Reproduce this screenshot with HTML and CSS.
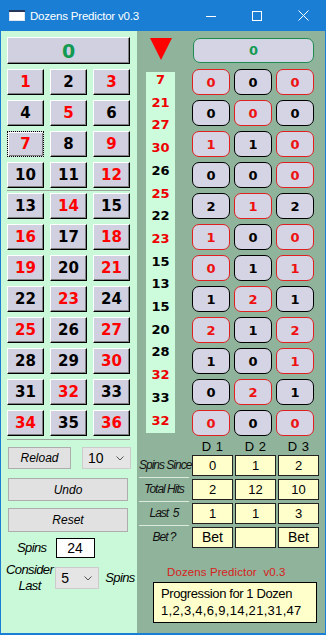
FILE: index.html
```html
<!DOCTYPE html>
<html lang="en">
<head>
    <meta charset="UTF-8">
    <meta name="viewport" content="width=device-width, initial-scale=1.0">
    <title>Dozens Predictor v0.3</title>
    <link rel="stylesheet" href="styles.css">
</head>
<body>
<div class="window">
    <!-- Barra de titulo -->
    <div class="titlebar">
        <svg class="app-icon" width="16" height="11" viewBox="0 0 16 11">
            <rect x="0.5" y="0.5" width="15" height="10" fill="#fff" stroke="#dfe6ee"/>
            <rect x="0" y="0" width="16" height="2" fill="#23375a"/>
        </svg>
        <span class="title">Dozens Predictor v0.3</span>
        <div class="controls">
            <span class="ctl"><svg width="10" height="10" viewBox="0 0 10 10"><path d="M0 5.5H10" stroke="#fff"/></svg></span>
            <span class="ctl"><svg width="10" height="10" viewBox="0 0 10 10"><rect x="0.5" y="0.5" width="9" height="9" fill="none" stroke="#fff"/></svg></span>
            <span class="ctl"><svg width="11" height="11" viewBox="0 0 11 11"><path d="M0.5 0.5L10.5 10.5M10.5 0.5L0.5 10.5" stroke="#fff"/></svg></span>
        </div>
    </div>

    <div class="client">
        <!-- Panel izquierdo: tablero de numeros -->
        <div class="left-panel">
            <button class="num big green">0</button>
            <div class="num-grid">
                <button class="num red">1</button>
                <button class="num">2</button>
                <button class="num red">3</button>
                <button class="num">4</button>
                <button class="num red">5</button>
                <button class="num">6</button>
                <button class="num red focus">7</button>
                <button class="num">8</button>
                <button class="num red">9</button>
                <button class="num">10</button>
                <button class="num">11</button>
                <button class="num red">12</button>
            </div>
            <div class="sep"></div>
            <div class="num-grid">
                <button class="num">13</button>
                <button class="num red">14</button>
                <button class="num">15</button>
                <button class="num red">16</button>
                <button class="num">17</button>
                <button class="num red">18</button>
                <button class="num red">19</button>
                <button class="num">20</button>
                <button class="num red">21</button>
                <button class="num">22</button>
                <button class="num red">23</button>
                <button class="num">24</button>
                <button class="num red">25</button>
                <button class="num">26</button>
                <button class="num red">27</button>
                <button class="num">28</button>
                <button class="num">29</button>
                <button class="num red">30</button>
                <button class="num">31</button>
                <button class="num red">32</button>
                <button class="num">33</button>
                <button class="num red">34</button>
                <button class="num">35</button>
                <button class="num red">36</button>
            </div>
            <div class="sep sep-last"></div>

            <div class="tool-row">
                <button class="win-btn reload">Reload</button>
                <div class="combo">
                    <span>10</span>
                    <svg width="8" height="5" viewBox="0 0 8 5"><path d="M0.5 0.5L4 4L7.5 0.5" fill="none" stroke="#555"/></svg>
                </div>
            </div>
            <button class="win-btn wide undo">Undo</button>
            <button class="win-btn wide reset">Reset</button>

            <div class="spins-row">
                <span class="side-label">Spins</span>
                <div class="textbox">24</div>
            </div>
            <div class="consider-row">
                <span class="side-label">Consider<br>Last</span>
                <div class="combo small">
                    <span>5</span>
                    <svg width="8" height="5" viewBox="0 0 8 5"><path d="M0.5 0.5L4 4L7.5 0.5" fill="none" stroke="#555"/></svg>
                </div>
                <span class="side-label">Spins</span>
            </div>
        </div>

        <!-- Panel derecho: historial y conteos -->
        <div class="right-panel">
            <div class="board">
                <div class="history-col">
                    <div class="arrow"></div>
                    <div class="history">
                        <div class="history-list">
                            <span class="red">7</span>
                            <span class="red">21</span>
                            <span class="red">27</span>
                            <span class="red">30</span>
                            <span>26</span>
                            <span class="red">25</span>
                            <span>22</span>
                            <span class="red">23</span>
                            <span>15</span>
                            <span>13</span>
                            <span>15</span>
                            <span>20</span>
                            <span>28</span>
                            <span class="red">32</span>
                            <span>33</span>
                            <span class="red">32</span>
                        </div>
                    </div>
                </div>
                <div class="counts">
                    <div class="count wide green">0</div>
                    <div class="count-grid">
                        <div class="count red">0</div><div class="count">0</div><div class="count red">0</div>
                        <div class="count">0</div><div class="count red">0</div><div class="count">0</div>
                        <div class="count red">1</div><div class="count">1</div><div class="count red">0</div>
                        <div class="count">0</div><div class="count">0</div><div class="count red">0</div>
                        <div class="count">2</div><div class="count red">1</div><div class="count">2</div>
                        <div class="count red">1</div><div class="count">0</div><div class="count red">0</div>
                        <div class="count red">0</div><div class="count">1</div><div class="count red">1</div>
                        <div class="count">1</div><div class="count red">2</div><div class="count">1</div>
                        <div class="count red">2</div><div class="count">1</div><div class="count red">2</div>
                        <div class="count">1</div><div class="count">0</div><div class="count red">1</div>
                        <div class="count">0</div><div class="count red">2</div><div class="count">1</div>
                        <div class="count red">0</div><div class="count">0</div><div class="count red">0</div>
                    </div>
                </div>
            </div>

            <div class="stats-head">
                <span></span><span>D 1</span><span>D 2</span><span>D 3</span>
            </div>
            <div class="stats">
                <span class="stat-label">Spins Since</span>
                <span class="cell">0</span><span class="cell">1</span><span class="cell">2</span>
                <span class="stat-label">Total Hits</span>
                <span class="cell">2</span><span class="cell">12</span><span class="cell">10</span>
                <span class="stat-label">Last&nbsp; 5</span>
                <span class="cell">1</span><span class="cell">1</span><span class="cell">3</span>
                <span class="stat-label last">Bet ?</span>
                <span class="cell bet">Bet</span><span class="cell bet"></span><span class="cell bet">Bet</span>
            </div>

            <div class="brand">Dozens Predictor  v0.3</div>
            <div class="progression">
                <div class="prog-title">Progression for 1 Dozen</div>
                <div class="prog-values">1,2,3,4,6,9,14,21,31,47</div>
            </div>
        </div>
    </div>
</div>
</body>
</html>
```

FILE: styles.css
```css
body {
    margin: 0;
    background: #ffffff;
    font-family: "Liberation Sans", Arial, sans-serif;
}
.window {
    width: 326px;
    height: 635px;
    background: #1a7fd4;
    display: flex;
    flex-direction: column;
}
.titlebar {
    height: 31px;
    display: flex;
    align-items: center;
    color: #fff;
}
.app-icon {
    margin-left: 9px;
    margin-top: 0;
}
.title {
    margin-left: 5px;
    font-size: 11.5px;
    letter-spacing: -0.2px;
}
.controls {
    margin-left: auto;
    display: flex;
    height: 31px;
}
.ctl {
    width: 46px;
    display: flex;
    align-items: center;
    justify-content: center;
}
.client {
    flex: 1;
    display: flex;
    margin: 0 1px 2px 1px;
}

/* Panel izquierdo */
.left-panel {
    width: 136px;
    background: #c9f9d9;
    padding: 6px 0 0 6px;
    box-sizing: border-box;
}
.num {
    padding: 0;
    margin: 0;
    background: #d0d0e0;
    border: 1px solid;
    border-color: #ffffff #000000 #000000 #ffffff;
    box-shadow: inset -1px -1px #808080;
    font-family: "DejaVu Sans", Verdana, sans-serif;
    font-weight: bold;
    font-size: 15px;
    color: #000;
    display: flex;
    align-items: center;
    justify-content: center;
}
.num.red { color: #ff0000; }
.num.focus {
    border: 1px dotted #000;
    box-shadow: inset 1px 1px #fff, inset -1px -1px #808080;
}
.num.big {
    width: 123px;
    height: 27px;
    margin-bottom: 5px;
    font-size: 19px;
}
.green { color: #129a52; }
.num-grid {
    display: grid;
    grid-template-columns: repeat(3, 37px);
    grid-auto-rows: 26px;
    gap: 5px 6px;
}
.sep {
    width: 123px;
    height: 1px;
    background: #9aa59e;
    margin: 2px 0;
}
.sep.sep-last {
    margin: 3px 0 7px 0;
}
.tool-row {
    display: flex;
    gap: 11px;
    margin-left: 1px;
}
.win-btn {
    padding: 0;
    background: #e1e1e1;
    border: 1px solid #adadad;
    font-family: "Liberation Sans", Arial, sans-serif;
    font-style: italic;
    font-size: 12px;
    color: #000;
}
.reload {
    width: 63px;
    height: 22px;
}
.wide {
    display: block;
    width: 120px;
    margin-left: 1px;
}
.undo {
    height: 23px;
    margin-top: 9px;
}
.reset {
    height: 24px;
    margin-top: 7px;
}
.combo {
    width: 49px;
    height: 22px;
    box-sizing: border-box;
    background: #e5e5e5;
    border: 1px solid #cccccc;
    display: flex;
    align-items: center;
    justify-content: space-between;
    padding: 0 6px 0 5px;
    font-size: 14px;
}
.combo.small {
    width: 44px;
}
.side-label {
    font-style: italic;
    font-size: 13px;
    letter-spacing: -0.6px;
    line-height: 16px;
    text-align: center;
}
.spins-row {
    display: flex;
    align-items: center;
    gap: 9px;
    margin: 6px 0 0 10px;
}
.textbox {
    width: 39px;
    height: 20px;
    box-sizing: border-box;
    background: #fff;
    border: 1px solid #000;
    font-size: 14px;
    line-height: 18px;
    text-align: center;
}
.consider-row {
    display: flex;
    align-items: center;
    margin: 4px 0 0 -1px;
}
.consider-row .combo {
    margin: 0 6px 0 2px;
}

/* Panel derecho */
.right-panel {
    width: 188px;
    background: #8fb39b;
    display: flex;
    flex-direction: column;
}
.board {
    display: flex;
    padding-top: 7px;
}
.history-col {
    margin-left: 9px;
    width: 29px;
    display: flex;
    flex-direction: column;
    align-items: center;
}
.arrow {
    width: 0;
    height: 0;
    border-left: 11px solid transparent;
    border-right: 11px solid transparent;
    border-top: 22px solid #ff0000;
}
.history {
    margin-top: 12px;
    width: 29px;
    height: 361px;
    background: #ccfcdc;
    font-family: "DejaVu Sans", Verdana, sans-serif;
    font-weight: bold;
    font-size: 13px;
    text-align: center;
}
.history-list {
    margin-top: -3px;
}
.history-list span {
    display: block;
    line-height: 22.7px;
    color: #000;
}
.history-list span.red { color: #ee0000; }
.counts {
    margin-left: 17px;
}
.count {
    height: 26px;
    box-sizing: border-box;
    background: #d4d4e4;
    border: 1px solid #000;
    border-radius: 7px;
    font-family: "DejaVu Sans", Verdana, sans-serif;
    font-weight: bold;
    font-size: 13px;
    color: #000;
    display: flex;
    align-items: center;
    justify-content: center;
}
.count.red {
    border-color: #e02020;
    color: #ee1111;
}
.count.wide {
    width: 121px;
    height: 25px;
    margin-bottom: 6px;
    border-color: #1e8c50;
    color: #129a52;
}
.count-grid {
    display: grid;
    grid-template-columns: repeat(3, 38px);
    grid-auto-rows: 26px;
    gap: 5px 4px;
}
.stats-head,
.stats {
    display: grid;
    grid-template-columns: 53px 41px 41px 41px;
    column-gap: 2px;
}
.stats-head {
    height: 19px;
    padding-top: 3px;
    box-sizing: border-box;
    font-size: 13px;
    letter-spacing: 0.5px;
    line-height: 16px;
    text-align: center;
}
.stats {
    grid-auto-rows: 21px;
    row-gap: 3px;
}
.stat-label {
    margin: 0 1px -2px 2px;
    border-bottom: 1px solid #dde8de;
    font-style: italic;
    font-size: 12px;
    letter-spacing: -1px;
    line-height: 21px;
    text-align: center;
    white-space: nowrap;
    color: #111;
}
.stat-label.last {
    border-bottom: none;
}
.cell {
    background: #ffffcc;
    border: 1px solid #222;
    font-size: 13px;
    line-height: 19px;
    text-align: center;
}
.cell.bet {
    font-size: 14px;
}
.brand {
    margin-top: 17px;
    padding-left: 30px;
    font-size: 11.5px;
    letter-spacing: 0.1px;
    line-height: 14px;
    color: #d82020;
    white-space: pre;
}
.progression {
    margin: 3px 0 0 16px;
    width: 164px;
    height: 41px;
    box-sizing: border-box;
    background: #ffffcc;
    border: 1px solid #000;
    padding: 2px 7px;
    font-size: 13px;
    line-height: 17px;
}
.prog-title {
    letter-spacing: -0.4px;
}
.prog-values {
    letter-spacing: 0.3px;
}
```
